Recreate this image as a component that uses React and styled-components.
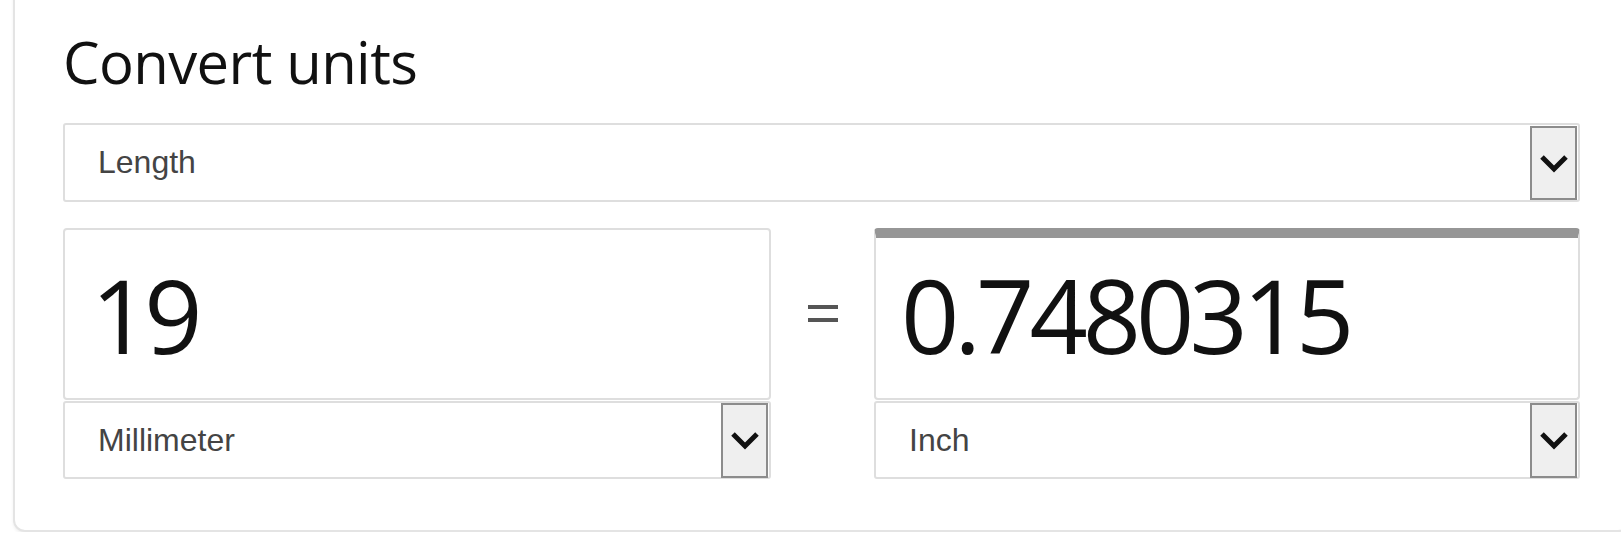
import React from "react"
import styled, { createGlobalStyle } from "styled-components"

const GlobalStyle = createGlobalStyle`
  html, body {
    margin: 0;
    padding: 0;
    background: #ffffff;
    overflow: hidden;
  }
`

const Card = styled.section`
  box-sizing: border-box;
  width: 1617px;
  margin: -23px 0 0 13px;
  padding: 50px 48px 51px 48px;
  background: #ffffff;
  border: 2px solid #e4e4e4;
  border-radius: 12px;
  box-shadow: 0 2px 3px rgba(0, 0, 0, 0.06);
`

const Title = styled.h2`
  margin: 0 0 28px 0;
  font-family: "Segoe UI", "Open Sans", sans-serif;
  font-weight: 400;
  font-size: 58px;
  line-height: 66px;
  letter-spacing: -0.6px;
  color: #111111;
`

const Select = styled.div`
  box-sizing: border-box;
  display: flex;
  align-items: center;
  justify-content: space-between;
  height: ${({ $h }) => $h || 79}px;
  padding: 0 1px 0 33px;
  border: 2px solid #dedede;
  border-radius: 3px;
  background: #ffffff;
  font-family: Arial, "Liberation Sans", sans-serif;
  font-size: 32px;
  color: #444444;
`

const DropButton = styled.span`
  box-sizing: border-box;
  display: flex;
  align-items: center;
  justify-content: center;
  width: 47px;
  height: ${({ $h }) => $h || 74}px;
  background: #efefef;
  border: 2px solid #8c8c8c;
`

const Row = styled.div`
  display: grid;
  grid-template-columns: 708px 103px 1fr;
  margin-top: 26px;
`

const Column = styled.div`
  display: flex;
  flex-direction: column;
  gap: 1px;
`

const ValueBox = styled.div`
  box-sizing: border-box;
  display: flex;
  align-items: center;
  height: 172px;
  padding: 0 0 0 ${({ $pad }) => $pad}px;
  border: 2px solid #dedede;
  border-top: ${({ $active }) =>
    $active ? "10px solid #969696" : "2px solid #dedede"};
  border-radius: 4px;
  background: #ffffff;
  font-family: "Segoe UI", "Open Sans", sans-serif;
  font-size: 102px;
  letter-spacing: -5px;
  color: #111111;
`

const ValueText = styled.span`
  margin-top: ${({ $shift }) => $shift || 0}px;
`

const Equals = styled.div`
  display: flex;
  align-items: center;
  justify-content: center;
  height: 172px;
`

const Chevron = () => (
  <svg width="30" height="22" viewBox="0 0 30 22">
    <path
      d="M3 5 L15 17 L27 5"
      fill="none"
      stroke="#111"
      strokeWidth="5"
      strokeLinecap="butt"
      strokeLinejoin="miter"
    />
  </svg>
)

const EqualsSign = () => (
  <svg width="30" height="18" viewBox="0 0 30 18">
    <rect x="0" y="0" width="30" height="4" fill="#555" />
    <rect x="0" y="13" width="30" height="4" fill="#555" />
  </svg>
)

export default function App() {
  return (
    <>
      <GlobalStyle />
      <Card>
        <Title>Convert units</Title>
        <Select>
          <span>Length</span>
          <DropButton>
            <Chevron />
          </DropButton>
        </Select>
        <Row>
          <Column>
            <ValueBox $pad={26}>
              <ValueText>19</ValueText>
            </ValueBox>
            <Select $h={78}>
              <span>Millimeter</span>
              <DropButton $h={75}>
                <Chevron />
              </DropButton>
            </Select>
          </Column>
          <Equals>
            <EqualsSign />
          </Equals>
          <Column>
            <ValueBox $pad={25} $active>
              <ValueText $shift={-8}>0.7480315</ValueText>
            </ValueBox>
            <Select $h={78}>
              <span>Inch</span>
              <DropButton $h={75}>
                <Chevron />
              </DropButton>
            </Select>
          </Column>
        </Row>
      </Card>
    </>
  )
}
